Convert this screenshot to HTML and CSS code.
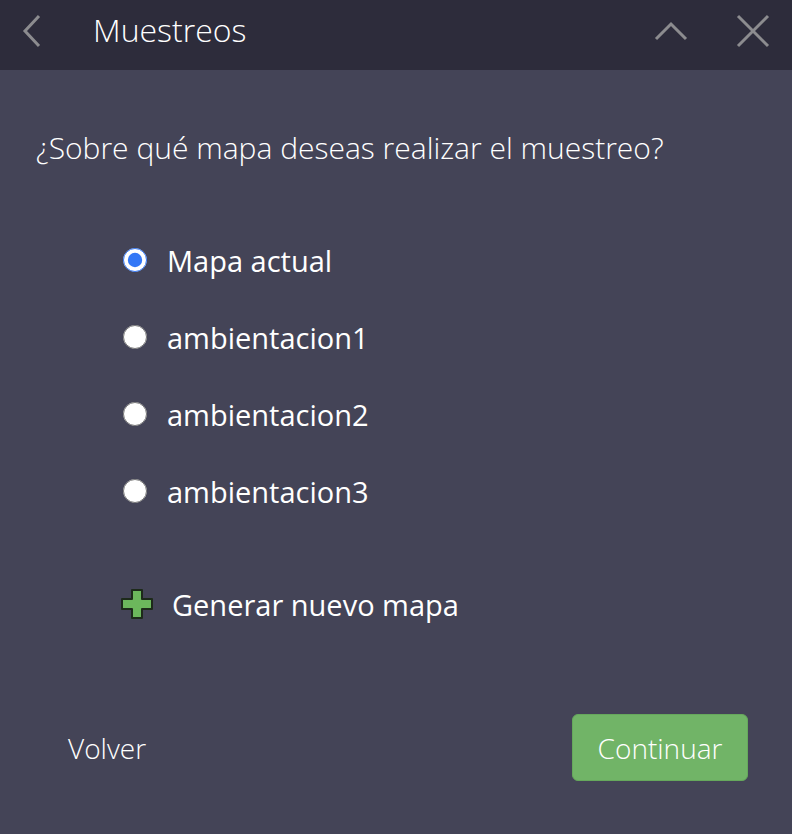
FILE: index.html
```html
<!DOCTYPE html>
<html lang="es">
<head>
  <meta charset="UTF-8">
  <title>Muestreos</title>
  <link rel="stylesheet" href="styles.css">
</head>
<body>
  <div class="panel">
    <div class="header">
      <button class="icon-btn back" aria-label="Atrás">
        <svg width="22" height="34" viewBox="0 0 22 34"><polyline points="18,2 4,17 18,32" fill="none" stroke="#8c8c8f" stroke-width="3"/></svg>
      </button>
      <h1 class="title">Muestreos</h1>
      <button class="icon-btn up" aria-label="Minimizar">
        <svg width="34" height="20" viewBox="0 0 34 20"><polyline points="2,18 17,3 32,18" fill="none" stroke="#8c8c8f" stroke-width="3"/></svg>
      </button>
      <button class="icon-btn close" aria-label="Cerrar">
        <svg width="34" height="34" viewBox="0 0 34 34"><path d="M2 2 L32 32 M32 2 L2 32" fill="none" stroke="#8c8c8f" stroke-width="3"/></svg>
      </button>
    </div>

    <div class="content">
      <p class="question">¿Sobre qué mapa deseas realizar el muestreo?</p>

      <form class="options">
        <label class="option"><input type="radio" name="mapa" checked> Mapa actual</label>
        <label class="option"><input type="radio" name="mapa"> ambientacion1</label>
        <label class="option"><input type="radio" name="mapa"> ambientacion2</label>
        <label class="option"><input type="radio" name="mapa"> ambientacion3</label>
      </form>

      <div class="new-map">
        <svg width="34" height="32" viewBox="0 0 34 32"><path d="M12 2 H22 V11 H32 V21 H22 V30 H12 V21 H2 V11 H12 Z" fill="#6cb75c" stroke="#1d2a1a" stroke-width="2" stroke-linejoin="round"/></svg>
        <span>Generar nuevo mapa</span>
      </div>

      <div class="footer">
        <button class="link-btn">Volver</button>
        <button class="primary-btn">Continuar</button>
      </div>
    </div>
  </div>
</body>
</html>
```

FILE: styles.css
```css
body {
  margin: 0;
  font-family: "Open Sans", sans-serif;
  background: #444457;
  color: #fff;
}
.panel {
  width: 792px;
  height: 834px;
  background: #444457;
}
.header {
  height: 62px;
  padding-bottom: 8px;
  background: #2d2c3b;
  display: flex;
  align-items: center;
}
.icon-btn {
  background: none;
  border: none;
  padding: 0;
  display: flex;
  cursor: pointer;
}
.back {
  margin-left: 21px;
}
.title {
  margin: 0 0 4px 50px;
  font-size: 32px;
  font-weight: 300;
  flex: 1;
}
.up {
  margin-right: 48px;
}
.close {
  margin-right: 22px;
}
.content {
  padding: 0 44px 0 36px;
}
.question {
  margin: 58px 0 0;
  font-size: 30px;
  font-weight: 300;
  line-height: 40px;
}
.options {
  margin: 73px 0 0 84px;
  display: flex;
  flex-direction: column;
  gap: 39px;
}
.option {
  display: flex;
  align-items: center;
  font-size: 29px;
  height: 38px;
  cursor: pointer;
}
.option input {
  width: 24px;
  height: 24px;
  margin: 0 20px 0 3px;
  accent-color: #3478f6;
}
.new-map {
  margin: 74px 0 0 84px;
  height: 40px;
  display: flex;
  align-items: center;
  gap: 18px;
  font-size: 29px;
}
.footer {
  margin-top: 90px;
  display: flex;
  justify-content: space-between;
  align-items: center;
}
.link-btn {
  background: none;
  border: none;
  color: #fff;
  font-family: inherit;
  font-weight: 300;
  font-size: 28px;
  padding: 0 0 0 32px;
}
.primary-btn {
  background: #71b467;
  border: 1px solid #66a85c;
  color: #fff;
  font-family: inherit;
  font-weight: 300;
  font-size: 28px;
  width: 176px;
  height: 67px;
  border-radius: 6px;
}
```
